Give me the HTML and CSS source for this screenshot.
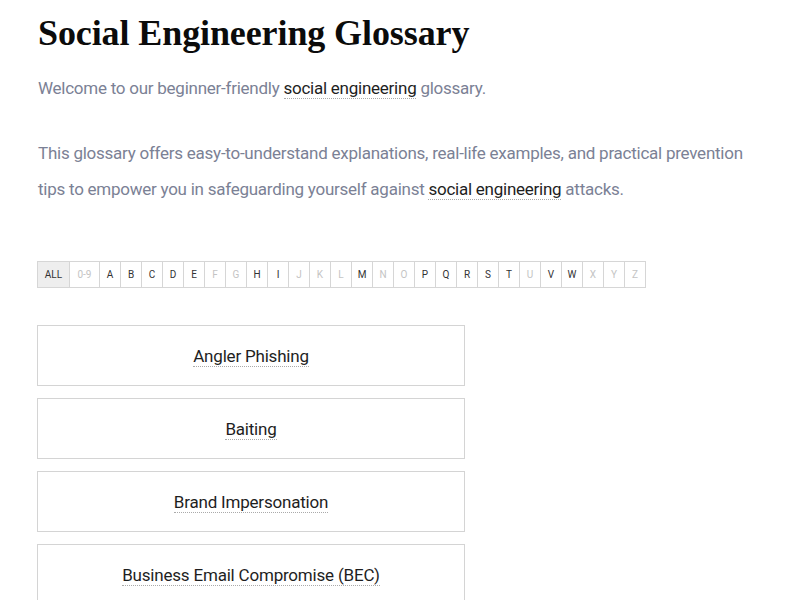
FILE: index.html
```html
<!DOCTYPE html>
<html>
<head>
<meta charset="utf-8">
<link rel="stylesheet" href="styles.css">
</head>
<body>
<main class="page">
  <h1 class="title">Social Engineering Glossary</h1>
  <p class="intro">Welcome to our beginner-friendly <a class="term" href="#">social engineering</a> glossary.</p>
  <p class="intro long">This glossary offers easy-to-understand explanations, real-life examples, and practical prevention tips to empower you in safeguarding yourself against <a class="term" href="#">social engineering</a> attacks.</p>
  <nav class="alpha">
    <span class="cell wide all">ALL</span>
    <span class="cell wide off">0-9</span>
    <span class="cell">A</span>
    <span class="cell">B</span>
    <span class="cell">C</span>
    <span class="cell">D</span>
    <span class="cell">E</span>
    <span class="cell off">F</span>
    <span class="cell off">G</span>
    <span class="cell">H</span>
    <span class="cell">I</span>
    <span class="cell off">J</span>
    <span class="cell off">K</span>
    <span class="cell off">L</span>
    <span class="cell">M</span>
    <span class="cell off">N</span>
    <span class="cell off">O</span>
    <span class="cell">P</span>
    <span class="cell">Q</span>
    <span class="cell">R</span>
    <span class="cell">S</span>
    <span class="cell">T</span>
    <span class="cell off">U</span>
    <span class="cell">V</span>
    <span class="cell">W</span>
    <span class="cell off">X</span>
    <span class="cell off">Y</span>
    <span class="cell off">Z</span>
  </nav>
  <div class="cards">
    <div class="card"><a class="term" href="#">Angler Phishing</a></div>
    <div class="card"><a class="term" href="#">Baiting</a></div>
    <div class="card"><a class="term" href="#">Brand Impersonation</a></div>
    <div class="card"><a class="term" href="#">Business Email Compromise (BEC)</a></div>
  </div>
</main>
</body>
</html>
```
FILE: styles.css
```css
html, body {
  margin: 0;
  background: #fff;
}
.page {
  padding: 0 37px;
  font-family: Roboto, "Liberation Sans", sans-serif;
}
.title {
  margin: 11px 0 0 1px;
  font-family: "Liberation Serif", serif;
  font-weight: 700;
  font-size: 36px;
  line-height: 44px;
  color: #0b0b0b;
  letter-spacing: -0.1px;
}
.intro {
  margin: 0;
  font-size: 17px;
  line-height: 36px;
  color: #7b8195;
  padding-left: 1px;
  letter-spacing: -0.25px;
}
.intro:first-of-type {
  margin-top: 15px;
}
.intro.long {
  margin-top: 29px;
  max-width: 726px;
}
.term {
  color: #1e1e1e;
  text-decoration: none;
  border-bottom: 1px dotted #aaa;
}
.alpha {
  display: flex;
  margin-top: 54px;
  width: max-content;
  border: 1px solid #d6d6d6;
  border-right: none;
}
.cell {
  width: 20px;
  height: 25px;
  display: flex;
  align-items: center;
  justify-content: center;
  border-right: 1px solid #d6d6d6;
  font-size: 10px;
  color: #333;
}
.cell.wide {
  width: 29px;
}
.cell.all {
  width: 31px;
  background: #eee;
}
.cell.off {
  color: #c4c4c4;
}
.cards {
  display: flex;
  flex-direction: column;
  gap: 12px;
  margin-top: 37px;
}
.card {
  width: 426px;
  height: 59px;
  border: 1px solid #d4d4d4;
  display: flex;
  align-items: center;
  justify-content: center;
  font-size: 17px;
  letter-spacing: -0.2px;
}
.card .term {
  line-height: 20px;
  padding-top: 2px;
}
```
